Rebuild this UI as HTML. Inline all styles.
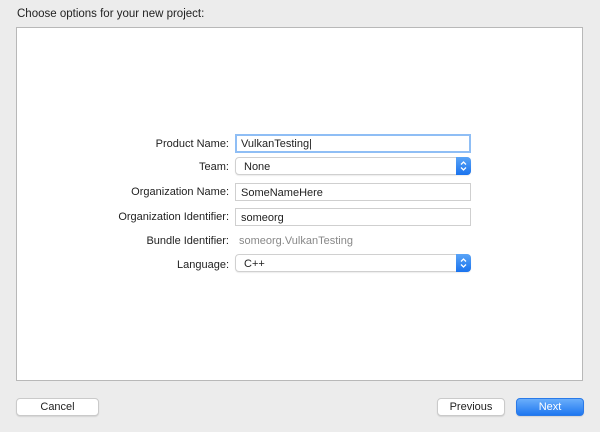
<!DOCTYPE html>
<html><head><style>
body{margin:0;width:600px;height:432px;background:#ececec;font-family:"Liberation Sans",sans-serif;font-size:11px;color:#222;position:relative;overflow:hidden}
.a{position:absolute}
.panel{left:16px;top:27px;width:567px;height:354px;background:#fff;border:1px solid #b8b8b8;box-sizing:border-box}
.lbl{width:200px;left:29px;text-align:right}
.fld{left:235px;width:236px;height:18px;background:#fff;border:1px solid #cfcfcf;box-sizing:border-box;padding:3px 5px 0;line-height:13px}
.pop{left:235px;width:236px;height:18px;background:#fff;border:1px solid #d0d0d0;border-radius:4px;box-sizing:border-box;padding:3px 8px 0;line-height:13px;box-shadow:0 1px 1px rgba(0,0,0,.08)}
.arr{position:absolute;right:-1px;top:-1px;width:15px;height:18px;background:linear-gradient(#5aa4f7,#1a73ee);border-radius:0 4px 4px 0}
.btn{height:18px;border:1px solid #cacaca;border-radius:4px;background:#fff;box-sizing:border-box;text-align:center;line-height:17px;box-shadow:0 1px 1px rgba(0,0,0,.1)}
</style></head><body>
<div class="a" style="left:17px;top:8px;font-size:11.5px">Choose options for your new project:</div>
<div class="a panel"></div>
<div class="a lbl" style="top:138px">Product Name:</div>
<div class="a fld" style="top:134px;border:2px solid #8fbef5;padding:2px 4px 0;height:19px">VulkanTesting|</div>
<div class="a lbl" style="top:161px">Team:</div>
<div class="a pop" style="top:157px">None<div class="arr"><svg width="15" height="18"><path d="M5 7.5l2.5-2.5 2.5 2.5M5 10.5l2.5 2.5 2.5-2.5" stroke="#fff" stroke-width="1.3" fill="none"/></svg></div></div>
<div class="a lbl" style="top:186px">Organization Name:</div>
<div class="a fld" style="top:183px">SomeNameHere</div>
<div class="a lbl" style="top:211px">Organization Identifier:</div>
<div class="a fld" style="top:208px">someorg</div>
<div class="a lbl" style="top:235px">Bundle Identifier:</div>
<div class="a" style="left:239px;top:235px;color:#888">someorg.VulkanTesting</div>
<div class="a lbl" style="top:259px">Language:</div>
<div class="a pop" style="top:254px">C++<div class="arr"><svg width="15" height="18"><path d="M5 7.5l2.5-2.5 2.5 2.5M5 10.5l2.5 2.5 2.5-2.5" stroke="#fff" stroke-width="1.3" fill="none"/></svg></div></div>
<div class="a btn" style="left:16px;top:398px;width:83px">Cancel</div>
<div class="a btn" style="left:437px;top:398px;width:68px">Previous</div>
<div class="a btn" style="left:516px;top:398px;width:68px;background:linear-gradient(#6aaefb,#1f77f0);border-color:#2a7ae8;color:#fff">Next</div>
</body></html>
